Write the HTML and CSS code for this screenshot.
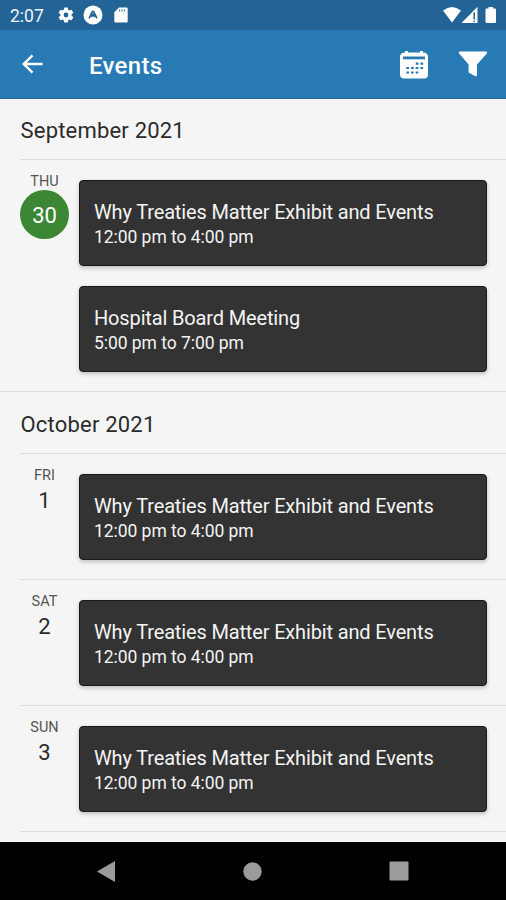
FILE: index.html
```html
<!DOCTYPE html>
<html lang="en">
<head>
<meta charset="utf-8">
<title>Events</title>
<link rel="stylesheet" href="styles.css">
</head>
<body>
<div class="status">
  <span class="clock">2:07</span>
  <svg class="gear" width="18" height="18" viewBox="0 0 24 24"><path fill="#fff" fill-rule="evenodd" d="M19.4 13a7.500 7.500 0 0 0 0-2l2.100-1.650a.5.5 0 0 0 .12-.64l-2-3.460a.5.5 0 0 0-.61-.22l-2.490 1a7.300 7.300 0 0 0-1.690-.98L14.450 2.400A.5.5 0 0 0 14 2h-4a.5.5 0 0 0-.49.42L9.130 5.070a7.700 7.700 0 0 0-1.690.98l-2.490-1a.5.5 0 0 0-.61.22l-2 3.460a.5.5 0 0 0 .12.640L4.570 11a7.900 7.900 0 0 0 0 2l-2.110 1.650a.5.5 0 0 0-.12.640l2 3.460c.12.220.39.300.61.220l2.490-1c.52.400 1.080.730 1.690.980l.38 2.650A.5.5 0 0 0 10 22h4a.5.5 0 0 0 .49-.42l.38-2.650a7.700 7.700 0 0 0 1.690-.98l2.490 1c.23.090.49 0 .61-.22l2-3.460a.5.5 0 0 0-.12-.64zM12 15.200a3.200 3.200 0 1 1 0-6.400 3.200 3.200 0 0 1 0 6.400z"/></svg>
  <svg class="expo" width="20" height="20" viewBox="0 0 20 20"><circle cx="10" cy="10" r="9.500" fill="#fff"/><path d="M6.100 13.300 9.100 6.900Q10 5.600 10.900 6.900L13.900 13.300M8.300 12 10 9.300l1.700 2.700" fill="none" stroke="#236395" stroke-width="1.600"/></svg>
  <svg class="sd" width="14" height="16" viewBox="0 0 14 16"><path fill="#fff" d="M5 .5h7.500q1.200 0 1.200 1.200v12.600q0 1.200-1.200 1.200h-11q-1.200 0-1.200-1.200V5.200z"/><path d="M5.500 2.200v2.500M8 2.200v2.500M10.500 2.200v2.500" stroke="#6e98b8" stroke-width="1.300"/></svg>
  <svg class="signals" width="56" height="18" viewBox="0 0 56 18"><g fill="#fff"><path d="M1 4.500Q10-2.500 19 4.500L10 16.500z"/><path d="M35.500.8V17H19.500z"/><path d="M46.500 1h4.500v1.500h2q1 0 1 1V16q0 1-1 1h-8.500q-1 0-1-1V3.500q0-1 1-1h2z"/></g><path d="M32.200 6.500v7M32.200 14.700v1.300" stroke="#236395" stroke-width="1.500"/></svg>
</div>
<header class="appbar">
  <svg class="back" width="22" height="20" viewBox="0 0 22 20"><path d="M20.500 10H2M10.500 1.300 1.800 10l8.700 8.700" fill="none" stroke="#fff" stroke-width="2.400"/></svg>
  <h1>Events</h1>
  <svg class="calendar" width="28" height="28" viewBox="0 0 28 28"><path fill="#fff" d="M5 0h3v1.500h12V0h3v1.500q5 .2 5 4.500V23.500q0 4-4 4H4q-4 0-4-4V6Q0 1.700 5 1.500z"/><path d="M3 5.500h22v2.800H3z" fill="#287ab5"/><path d="M15.800 12.700h8M6.300 17h17.500M6.300 21.500h12" stroke="#287ab5" stroke-width="2.200" stroke-dasharray="2.700 2"/></svg>
  <svg class="filter" width="30" height="26" viewBox="0 0 30 26"><path fill="#fff" d="M1.500.5h27q1.200.8.4 2L19 13.400V24q-.4 1.700-2 1L11.300 22q-.7-.5-.7-1.300v-7.300L1.100 2.500q-.8-1.200.4-2z"/></svg>
</header>
<main>
  <section class="month">
    <h2>September 2021</h2>
    <div class="day">
      <div class="date"><span class="dow">THU</span><span class="num today">30</span></div>
      <div class="cards">
        <article class="card"><h3>Why Treaties Matter Exhibit and Events</h3><p>12:00 pm to 4:00 pm</p></article>
        <article class="card"><h3>Hospital Board Meeting</h3><p>5:00 pm to 7:00 pm</p></article>
      </div>
    </div>
  </section>
  <section class="month">
    <h2>October 2021</h2>
    <div class="day">
      <div class="date"><span class="dow">FRI</span><span class="num">1</span></div>
      <div class="cards"><article class="card"><h3>Why Treaties Matter Exhibit and Events</h3><p>12:00 pm to 4:00 pm</p></article></div>
    </div>
    <div class="day">
      <div class="date"><span class="dow">SAT</span><span class="num">2</span></div>
      <div class="cards"><article class="card"><h3>Why Treaties Matter Exhibit and Events</h3><p>12:00 pm to 4:00 pm</p></article></div>
    </div>
    <div class="day">
      <div class="date"><span class="dow">SUN</span><span class="num">3</span></div>
      <div class="cards"><article class="card"><h3>Why Treaties Matter Exhibit and Events</h3><p>12:00 pm to 4:00 pm</p></article></div>
    </div>
    <div class="day"></div>
  </section>
</main>
<nav class="navbar">
  <svg width="18" height="21" viewBox="0 0 18 21"><path d="M18 0v21L0 10.500z" fill="#9b9b9b"/></svg>
  <svg width="19" height="19" viewBox="0 0 19 19"><circle cx="9.500" cy="9.500" r="9.200" fill="#9b9b9b"/></svg>
  <svg width="20" height="20" viewBox="0 0 20 20"><rect x=".5" y=".5" width="19" height="19" rx="1" fill="#9b9b9b"/></svg>
</nav>
</body>
</html>
```
FILE: styles.css
```css
* { box-sizing: border-box; }
body {
  margin: 0;
  width: 506px;
  height: 900px;
  overflow: hidden;
  display: flex;
  flex-direction: column;
  background: #f5f5f5;
  font-family: Roboto, "Liberation Sans", sans-serif;
  color: #2b2b2b;
}
h1, h2, h3, p { margin: 0; font-weight: 400; white-space: nowrap; }
svg { display: block; flex: none; }

.status {
  height: 30px;
  flex: none;
  display: flex;
  align-items: center;
  padding: 0 8px 0 10px;
  background: #236395;
}
.clock { width: 47px; font-size: 17.500px; line-height: 30px; color: #f0f5f9; padding-top: 1px; }
.expo { margin-left: 8px; }
.sd { margin-left: 11px; }
.signals { margin-left: auto; }

.appbar {
  height: 69px;
  flex: none;
  display: flex;
  align-items: center;
  padding: 0 18px 0 22px;
  background: #287ab5;
  border-bottom: 1px solid #226ca2;
  color: #fff;
}
.appbar h1 { margin-left: 45px; padding-top: 3px; font-size: 24px; font-weight: 500; letter-spacing: .3px; }
.calendar { margin: 2px 0 0 auto; }
.filter { margin-left: 30px; }

main { flex: 1; overflow: hidden; }
.month + .month { border-top: 1px solid #dcdcdc; }
.month h2 {
  height: 60px;
  padding-left: 20.500px;
  font-size: 22px;
  line-height: 63px;
  letter-spacing: .2px;
}
.month + .month h2 { height: 61px; line-height: 65px; }
.day {
  display: flex;
  margin-left: 20px;
  padding: 20px 19px 19px 0;
  border-top: 1px solid #dcdcdc;
}
.date {
  width: 49px;
  margin-top: -8px;
  display: flex;
  flex-direction: column;
  align-items: center;
}
.dow { height: 18px; font-size: 14.500px; line-height: 19px; color: #555; }
.num { width: 49px; height: 49px; font-size: 22px; line-height: 51px; text-align: center; }
.num:not(.today) { height: 30px; line-height: 34px; }
.today { border-radius: 50%; background: #3c8734; color: #fff; }
.cards { flex: 1; margin-left: 10px; display: flex; flex-direction: column; gap: 20px; }
.card {
  height: 86px;
  padding: 19px 14px 0;
  border: 1px solid #191919;
  border-radius: 4px;
  background: #333;
  color: #f4f4f4;
  box-shadow: 0 2px 4px rgba(0, 0, 0, .22);
}
.card h3 { font-size: 20px; line-height: 25px; letter-spacing: -.15px; }
.card p { font-size: 17.500px; line-height: 24px; letter-spacing: -.05px; }

.navbar {
  height: 58px;
  flex: none;
  display: flex;
  align-items: center;
  justify-content: space-between;
  padding: 0 97px;
  background: #000;
}
```
